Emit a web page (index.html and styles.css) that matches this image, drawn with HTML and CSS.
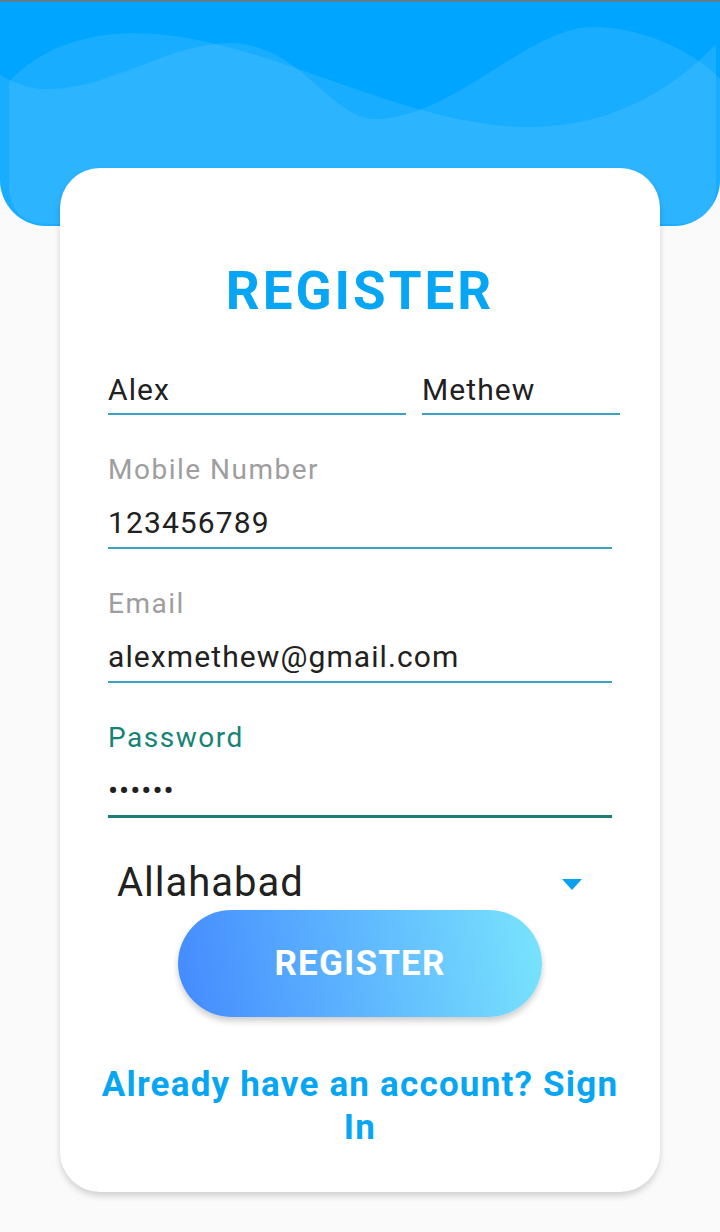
FILE: index.html
```html
<!DOCTYPE html>
<html>
<head>
<meta charset="utf-8">
<link rel="stylesheet" href="styles.css">
</head>
<body>
<div class="header">
  <svg class="waves" viewBox="0 0 720 226" preserveAspectRatio="none" width="720" height="226">
    <path d="M0,73 C20,84 35,88 52,87 C110,86 170,41 230,41 C300,41 330,117 376,117 C450,117 530,25 592,25 C650,25 700,55 720,77 L720,226 L0,226 Z" fill="#ffffff" fill-opacity="0.095"/>
    <path d="M9,80 C40,45 90,31 133,31 C260,31 400,125 528,125 C620,125 680,80 716,42 L716,182 Q716,222 676,222 L49,222 Q9,222 9,182 Z" fill="#ffffff" fill-opacity="0.095"/>
  </svg>
</div>
<div class="card">
  <h1 class="title">REGISTER</h1>
  <div class="name-row">
    <div class="field first"><div class="value">Alex</div></div>
    <div class="field last"><div class="value">Methew</div></div>
  </div>
  <div class="block">
    <div class="label">Mobile Number</div>
    <div class="field"><div class="value">123456789</div></div>
  </div>
  <div class="block">
    <div class="label">Email</div>
    <div class="field"><div class="value">alexmethew@gmail.com</div></div>
  </div>
  <div class="block focused">
    <div class="label">Password</div>
    <div class="field"><div class="value dots">••••••</div></div>
  </div>
  <div class="spinner">
    <span class="spinner-text">Allahabad</span>
    <span class="caret"></span>
  </div>
  <div class="btn-wrap">
    <div class="btn">REGISTER</div>
  </div>
  <div class="link">Already have an account? Sign In</div>
</div>
</body>
</html>
```
FILE: styles.css
```css
html, body {
  margin: 0;
  padding: 0;
}
body {
  background: #fafafa;
  font-family: Roboto, "Liberation Sans", sans-serif;
  width: 720px;
  height: 1232px;
  overflow: hidden;
}
.header {
  height: 226px;
  background: #00a5ff;
  border-bottom-left-radius: 46px;
  border-bottom-right-radius: 46px;
  border-top: 2px solid #5f7d8c;
  box-sizing: border-box;
  overflow: hidden;
}
.waves {
  display: block;
  width: 720px;
  height: 226px;
}
.card {
  position: relative;
  margin: -58px 60px 0;
  background: #ffffff;
  border-radius: 40px;
  box-shadow: 0 4px 6px rgba(0, 0, 0, 0.16);
  padding: 93px 48px 42px;
  height: 1024px;
  box-sizing: border-box;
}
.title {
  margin: 0;
  text-align: center;
  font-size: 53px;
  line-height: 60px;
  font-weight: 700;
  letter-spacing: 3px;
  color: #07a6f4;
}
.name-row {
  display: flex;
  gap: 16px;
  margin: 51px -8px 0 0;
}
.field {
  border-bottom: 2px solid #3ba2c4;
  padding-bottom: 5px;
}
.field.first { width: 298px; }
.field.last { width: 198px; }
.value {
  font-size: 30px;
  line-height: 36px;
  letter-spacing: 1.1px;
  color: #212121;
}
.block {
  margin-top: 38px;
}
.block .field {
  padding-bottom: 6px;
}
.label {
  font-size: 28px;
  line-height: 34px;
  letter-spacing: 1.5px;
  color: #9e9e9e;
  margin-bottom: 18px;
}
.focused .label {
  color: #168377;
}
.focused .field {
  border-bottom: 3px solid #1e7c74;
}
.value.dots {
  letter-spacing: 1px;
}
.spinner {
  margin-top: 41px;
  display: flex;
  align-items: center;
  justify-content: space-between;
  padding-left: 9px;
  padding-right: 30px;
  height: 48px;
}
.spinner-text {
  font-size: 40px;
  line-height: 48px;
  letter-spacing: 1px;
  color: #212121;
}
.caret {
  width: 0;
  height: 0;
  border-left: 10px solid transparent;
  border-right: 10px solid transparent;
  border-top: 11px solid #0aa2f0;
  margin-top: 2px;
}
.btn-wrap {
  display: flex;
  justify-content: center;
  margin-top: 3px;
}
.btn {
  width: 364px;
  height: 107px;
  border-radius: 54px;
  background: linear-gradient(80deg, #448aff 0%, #79e4fd 100%);
  box-shadow: 0 4px 6px rgba(0, 0, 0, 0.2);
  color: #ffffff;
  font-size: 35px;
  font-weight: 700;
  letter-spacing: 1.2px;
  display: flex;
  align-items: center;
  justify-content: center;
}
.link {
  margin: 46px -16px 0;
  text-align: center;
  font-size: 35px;
  line-height: 43px;
  font-weight: 700;
  letter-spacing: 1.2px;
  color: #07a6f4;
}
```
